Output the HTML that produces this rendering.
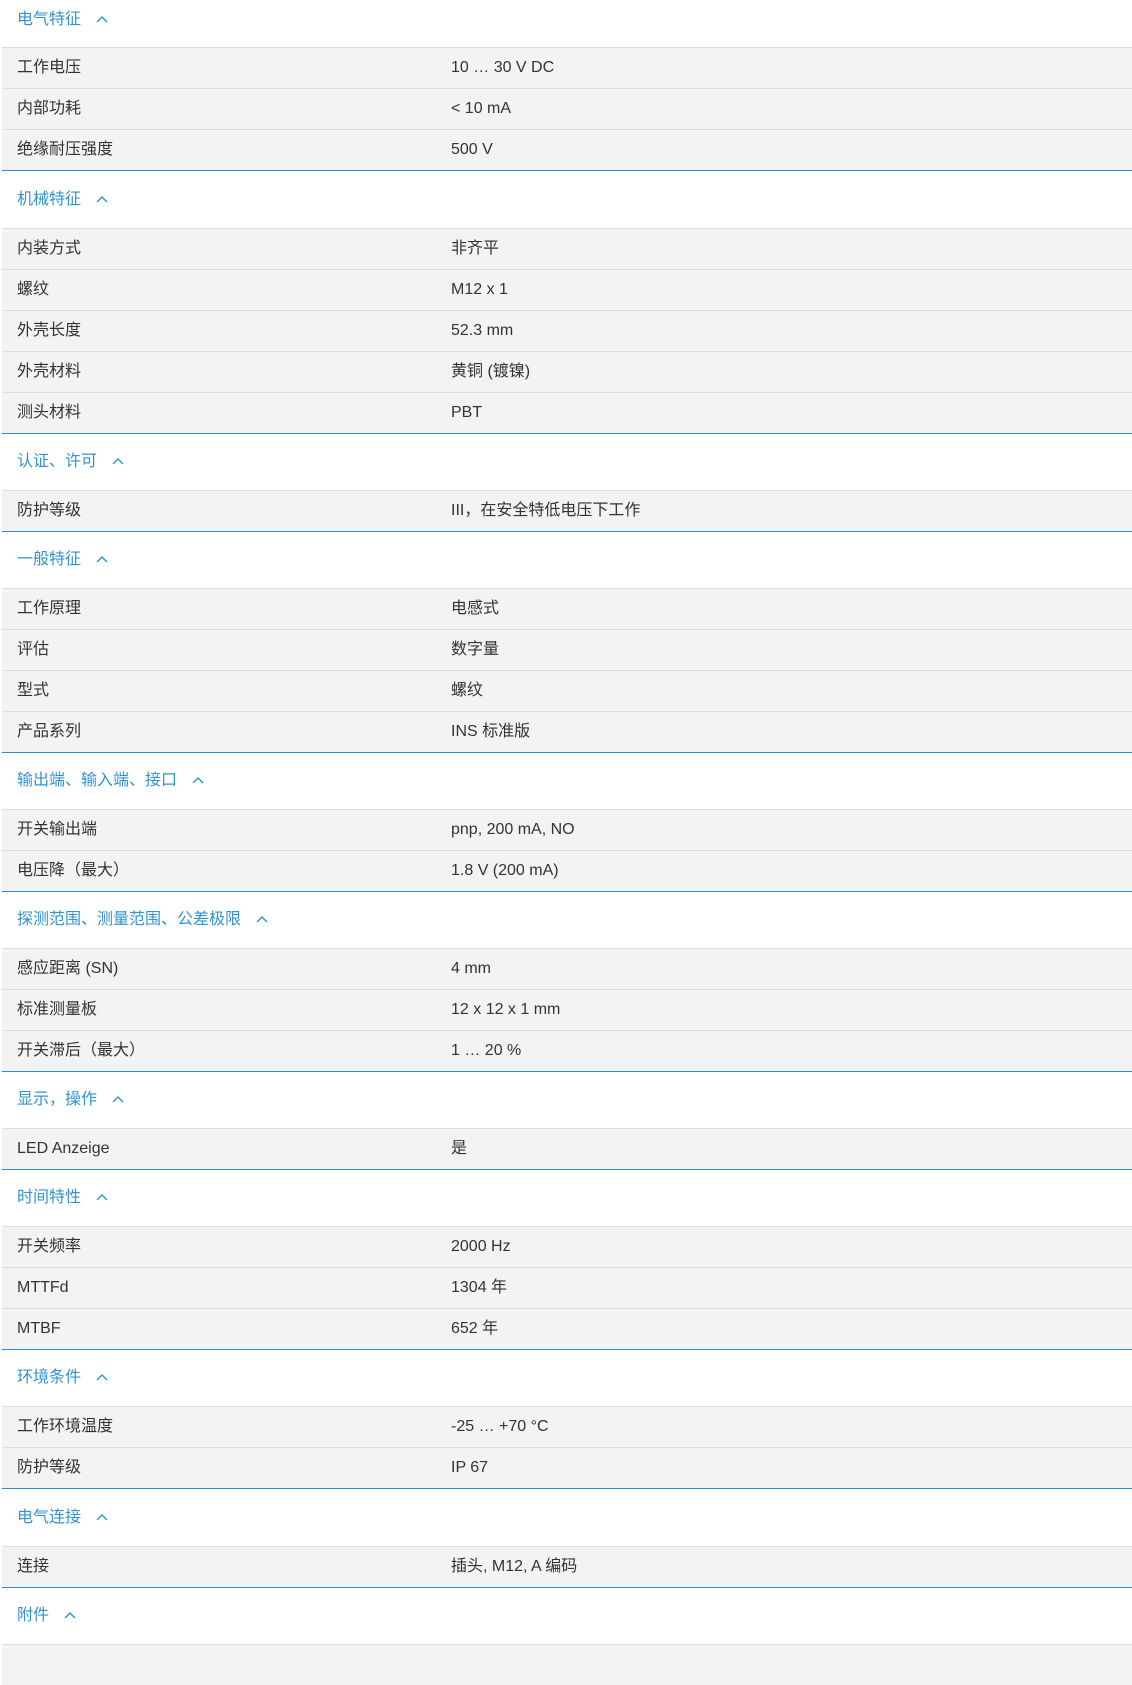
<!DOCTYPE html>
<html><head><meta charset="utf-8"><style>
*{margin:0;padding:0;box-sizing:border-box}
body{width:1132px;height:1658px;overflow:hidden;background:#fff;font-family:"Liberation Sans","Noto Sans CJK SC",sans-serif;font-size:16px;color:#333}
.wrap{margin-left:2px;width:1130px}
.h{height:56px;position:relative;color:#3193cf;padding-left:15px}
.h span{position:absolute;left:15px;bottom:18px;line-height:20px;white-space:nowrap}
.h svg{display:inline-block;margin-left:15px;vertical-align:1px}
.r{height:41px;border-top:1px solid #dcdcdc;background:#f3f3f3;position:relative}
.r div{position:absolute;top:0;line-height:40px;white-space:nowrap}
.r .a{left:15px}.r .b{left:449px}
.s{border-bottom:1px solid #2a8bd6}
</style></head><body><div class="wrap">
<div class="s">
<div class="h" style="height:47px"><span style="bottom:17px">电气特征<svg width="12" height="8" viewBox="0 0 12 8"><path d="M1 7L6 2L11 7" fill="none" stroke="#3193cf" stroke-width="1.4"/></svg></span></div>
<div class="r"><div class="a">工作电压</div><div class="b">10 … 30 V DC</div></div>
<div class="r"><div class="a">内部功耗</div><div class="b">&lt; 10 mA</div></div>
<div class="r"><div class="a">绝缘耐压强度</div><div class="b">500 V</div></div>
</div>
<div class="s">
<div class="h" style="height:57px"><span>机械特征<svg width="12" height="8" viewBox="0 0 12 8"><path d="M1 7L6 2L11 7" fill="none" stroke="#3193cf" stroke-width="1.4"/></svg></span></div>
<div class="r"><div class="a">内装方式</div><div class="b">非齐平</div></div>
<div class="r"><div class="a">螺纹</div><div class="b">M12 x 1</div></div>
<div class="r"><div class="a">外壳长度</div><div class="b">52.3 mm</div></div>
<div class="r"><div class="a">外壳材料</div><div class="b">黄铜 (镀镍)</div></div>
<div class="r"><div class="a">测头材料</div><div class="b">PBT</div></div>
</div>
<div class="s">
<div class="h"><span>认证、许可<svg width="12" height="8" viewBox="0 0 12 8"><path d="M1 7L6 2L11 7" fill="none" stroke="#3193cf" stroke-width="1.4"/></svg></span></div>
<div class="r"><div class="a">防护等级</div><div class="b">III，在安全特低电压下工作</div></div>
</div>
<div class="s">
<div class="h"><span>一般特征<svg width="12" height="8" viewBox="0 0 12 8"><path d="M1 7L6 2L11 7" fill="none" stroke="#3193cf" stroke-width="1.4"/></svg></span></div>
<div class="r"><div class="a">工作原理</div><div class="b">电感式</div></div>
<div class="r"><div class="a">评估</div><div class="b">数字量</div></div>
<div class="r"><div class="a">型式</div><div class="b">螺纹</div></div>
<div class="r"><div class="a">产品系列</div><div class="b">INS 标准版</div></div>
</div>
<div class="s">
<div class="h"><span>输出端、输入端、接口<svg width="12" height="8" viewBox="0 0 12 8"><path d="M1 7L6 2L11 7" fill="none" stroke="#3193cf" stroke-width="1.4"/></svg></span></div>
<div class="r"><div class="a">开关输出端</div><div class="b">pnp, 200 mA, NO</div></div>
<div class="r"><div class="a">电压降（最大）</div><div class="b">1.8 V (200 mA)</div></div>
</div>
<div class="s">
<div class="h"><span>探测范围、测量范围、公差极限<svg width="12" height="8" viewBox="0 0 12 8"><path d="M1 7L6 2L11 7" fill="none" stroke="#3193cf" stroke-width="1.4"/></svg></span></div>
<div class="r"><div class="a">感应距离 (SN)</div><div class="b">4 mm</div></div>
<div class="r"><div class="a">标准测量板</div><div class="b">12 x 12 x 1 mm</div></div>
<div class="r"><div class="a">开关滞后（最大）</div><div class="b">1 … 20 %</div></div>
</div>
<div class="s">
<div class="h"><span>显示，操作<svg width="12" height="8" viewBox="0 0 12 8"><path d="M1 7L6 2L11 7" fill="none" stroke="#3193cf" stroke-width="1.4"/></svg></span></div>
<div class="r"><div class="a">LED Anzeige</div><div class="b">是</div></div>
</div>
<div class="s">
<div class="h"><span>时间特性<svg width="12" height="8" viewBox="0 0 12 8"><path d="M1 7L6 2L11 7" fill="none" stroke="#3193cf" stroke-width="1.4"/></svg></span></div>
<div class="r"><div class="a">开关频率</div><div class="b">2000 Hz</div></div>
<div class="r"><div class="a">MTTFd</div><div class="b">1304 年</div></div>
<div class="r"><div class="a">MTBF</div><div class="b">652 年</div></div>
</div>
<div class="s">
<div class="h"><span>环境条件<svg width="12" height="8" viewBox="0 0 12 8"><path d="M1 7L6 2L11 7" fill="none" stroke="#3193cf" stroke-width="1.4"/></svg></span></div>
<div class="r"><div class="a">工作环境温度</div><div class="b">-25 … +70 °C</div></div>
<div class="r"><div class="a">防护等级</div><div class="b">IP 67</div></div>
</div>
<div class="s">
<div class="h" style="height:57px"><span>电气连接<svg width="12" height="8" viewBox="0 0 12 8"><path d="M1 7L6 2L11 7" fill="none" stroke="#3193cf" stroke-width="1.4"/></svg></span></div>
<div class="r"><div class="a">连接</div><div class="b">插头, M12, A 编码</div></div>
</div>
<div>
<div class="h"><span>附件<svg width="12" height="8" viewBox="0 0 12 8"><path d="M1 7L6 2L11 7" fill="none" stroke="#3193cf" stroke-width="1.4"/></svg></span></div>
<div class="r"></div>
</div>
</div></body></html>
